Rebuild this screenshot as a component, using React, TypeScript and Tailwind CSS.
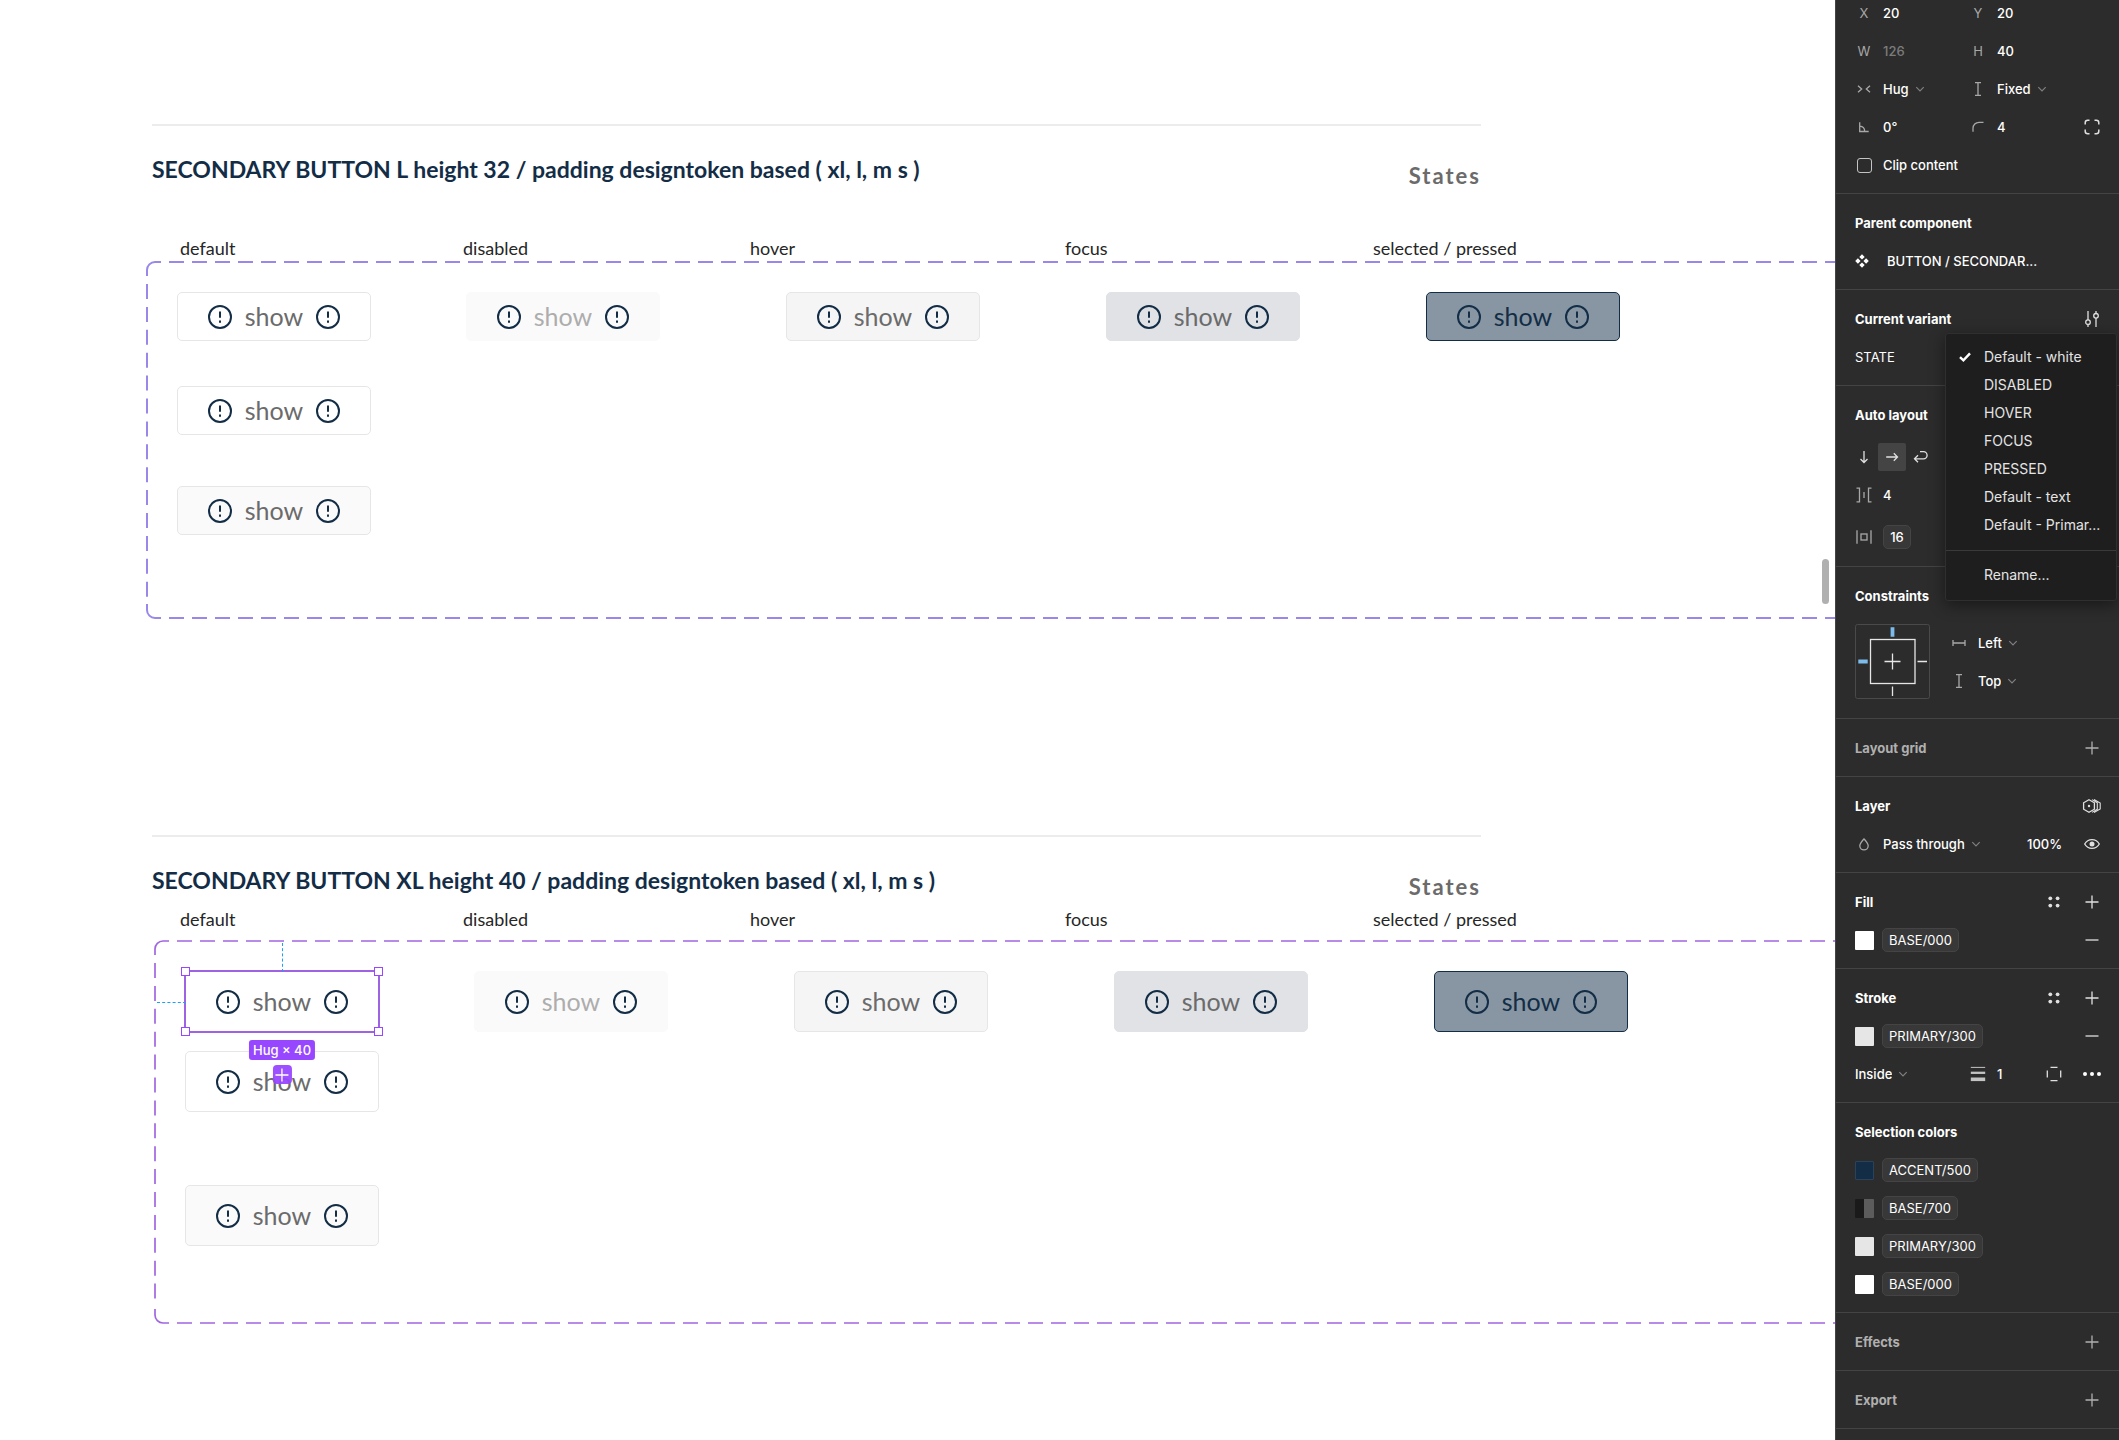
import { ReactNode, useState } from "react";
import clsx from "clsx";

const cell = "flex w-[38px] shrink-0 items-center justify-center";

/* ---------- icons ---------- */

const Icon = ({
  children,
  className = "text-[#e0e0e0]",
}: {
  children: ReactNode;
  className?: string;
}) => (
  <svg
    viewBox="0 0 24 24"
    className={clsx("size-6 shrink-0", className)}
    fill="none"
    stroke="currentColor"
    strokeWidth="1.3"
    aria-hidden="true"
  >
    {children}
  </svg>
);

const muted = "text-[#a8a8a8]";

const PlusIcon = ({ className }: { className?: string }) => (
  <Icon className={className}>
    <path d="M5.5 12h13M12 5.5v13" />
  </Icon>
);

const MinusIcon = () => (
  <Icon>
    <path d="M5.5 12h13" />
  </Icon>
);

const StylesIcon = () => (
  <Icon>
    <g fill="currentColor" stroke="none">
      <circle cx="8.3" cy="8.3" r="1.9" />
      <circle cx="15.6" cy="8.3" r="1.9" />
      <circle cx="8.3" cy="15.6" r="1.9" />
      <circle cx="15.6" cy="15.6" r="1.9" />
    </g>
  </Icon>
);

const HeightIcon = () => (
  <Icon className={muted}>
    <path d="M9 5.7h6M9 18.3h6M12 5.7v12.6" />
  </Icon>
);

const Chevron = () => (
  <svg
    viewBox="0 0 10 10"
    className="pointer-events-none size-[10px] shrink-0 text-[#808080]"
    fill="none"
    stroke="currentColor"
    strokeWidth="1.2"
    aria-hidden="true"
  >
    <path d="M1.3 3.2 5 6.9l3.7-3.7" />
  </svg>
);

const AlertIcon = () => (
  <svg
    viewBox="0 0 24 24"
    className="size-6 shrink-0 text-[#132d46]"
    fill="none"
    stroke="currentColor"
    strokeWidth="2"
    aria-hidden="true"
  >
    <circle cx="12" cy="12" r="11" />
    <path d="M12 6.6v6.2M12 15.6v2.2" />
  </svg>
);

/* ---------- canvas ---------- */

const variants = {
  white: "border-[#e6e6e6] bg-white text-[#6b6b6b]",
  light: "border-[#e6e6e6] bg-[#fafafa] text-[#6b6b6b]",
  disabled: "border-[#fafafa] bg-[#fafafa] text-[#adadad]",
  hover: "border-[#e6e6e6] bg-[#f5f5f5] text-[#6b6b6b]",
  focus: "border-[#e0e2e6] bg-[#e0e2e6] text-[#6b6b6b]",
  pressed: "border-[#132d46] bg-[#8796a2] text-[#132d46]",
};

type Size = "l" | "xl";

const ShowButton = ({
  variant,
  size,
}: {
  variant: keyof typeof variants;
  size: Size;
}) => (
  <button
    type="button"
    disabled={variant === "disabled"}
    className={clsx(
      "flex w-[194px] items-center justify-between rounded-[5px] border px-[30px]",
      size === "l" ? "h-[49px]" : "h-[61px]",
      variants[variant]
    )}
  >
    <AlertIcon />
    <span className="pb-0.5 text-[25px] leading-8">show</span>
    <AlertIcon />
  </button>
);

// dashed outline of a component set, open towards the right edge of the canvas
const DashedOutline = ({
  height,
  color,
  width,
}: {
  height: number;
  color: string;
  width: number;
}) => (
  <svg
    className="pointer-events-none absolute inset-0 size-full overflow-visible"
    fill="none"
    stroke={color}
    strokeWidth={width}
    aria-hidden="true"
  >
    <path d="M1 15V9a8 8 0 0 1 8-8h6" />
    <path d={`M1 ${height - 15}v6a8 8 0 0 0 8 8h6`} />
    <line x1="23" y1="1" x2="100%" y2="1" strokeDasharray="15 8" />
    <line
      x1="23"
      y1={height - 1}
      x2="100%"
      y2={height - 1}
      strokeDasharray="15 8"
    />
    <line x1="1" y1="23" x2="1" y2={height - 22} strokeDasharray="15 7.9" />
  </svg>
);

const Heading = ({ title, size }: { title: string; size: Size }) => (
  <div
    className={clsx(
      "mr-[354px] ml-[152px] flex items-start justify-between border-t-2 border-[#ececec] pt-[27px]",
      size === "l" ? "h-[112px]" : "h-[72px]"
    )}
  >
    <h2 className="text-[23px] leading-8 font-bold whitespace-nowrap text-[#132d46]">
      {title}
    </h2>
    <span className="pt-[7px] text-[22px] leading-8 font-bold tracking-[2px] text-[#6b6b6b]">
      States
    </span>
  </div>
);

const StateLabels = () => (
  <div className="ml-[180px] grid grid-cols-[283px_287px_315px_308px_auto] text-[18px] leading-6 whitespace-nowrap text-[#262626]">
    <span>default</span>
    <span>disabled</span>
    <span>hover</span>
    <span>focus</span>
    <span>selected / pressed</span>
  </div>
);

const Handle = ({ className }: { className: string }) => (
  <span
    className={clsx(
      "absolute size-[9px] border border-[#9747ff] bg-white",
      className
    )}
  />
);

const Selection = () => (
  <div className="pointer-events-none absolute -inset-px border-2 border-[#9f62e3]">
    <Handle className="-top-[5px] -left-[5px]" />
    <Handle className="-top-[5px] -right-[5px]" />
    <Handle className="-bottom-[5px] -left-[5px]" />
    <Handle className="-right-[5px] -bottom-[5px]" />
    <span className="absolute bottom-full left-1/2 h-[29px] border-l border-dashed border-[#18a0fb]" />
    <span className="absolute top-1/2 right-full w-[29px] border-t border-dashed border-[#18a0fb]" />
    <div className="absolute top-full left-1/2 mt-[9px] flex -translate-x-1/2 flex-col items-center gap-[5px]">
      <span className="rounded-[3px] bg-[#9747ff] px-1 font-[Inter] text-[13px] leading-5 font-medium whitespace-nowrap text-white">
        Hug × 40
      </span>
      <span className="flex size-[19px] items-center justify-center rounded-[4px] bg-[#9747ff]/95">
        <PlusIcon className="text-white" />
      </span>
    </div>
  </div>
);

const stateRow = "grid grid-cols-[289px_320px_320px_320px_194px] items-start";

const Canvas = () => (
  <main className="relative min-w-0 flex-1 overflow-hidden bg-white pt-[124px] font-[Lato,sans-serif]">
    <Heading
      size="l"
      title="SECONDARY BUTTON L height 32 / padding designtoken based ( xl, l, m s )"
    />
    <StateLabels />
    <section className="relative mt-px ml-[146px] pt-[31px] pb-[84px] pl-[31px]">
      <DashedOutline height={358} color="#9b87ea" width={2} />
      <div className={stateRow}>
        <ShowButton size="l" variant="white" />
        <ShowButton size="l" variant="disabled" />
        <ShowButton size="l" variant="hover" />
        <ShowButton size="l" variant="focus" />
        <ShowButton size="l" variant="pressed" />
      </div>
      <div className="mt-[45px] flex flex-col gap-[51px]">
        <ShowButton size="l" variant="white" />
        <ShowButton size="l" variant="light" />
      </div>
    </section>

    <div className="h-[216px]" />

    <Heading
      size="xl"
      title="SECONDARY BUTTON XL height 40 / padding designtoken based ( xl, l, m s )"
    />
    <StateLabels />
    <section className="relative mt-[9px] ml-[154px] pt-[31px] pb-[78px] pl-[31px]">
      <DashedOutline height={384} color="#a066e0" width={1.7} />
      <div className={stateRow}>
        <div className="relative z-10 w-[194px]">
          <ShowButton size="xl" variant="white" />
          <Selection />
        </div>
        <ShowButton size="xl" variant="disabled" />
        <ShowButton size="xl" variant="hover" />
        <ShowButton size="xl" variant="focus" />
        <ShowButton size="xl" variant="pressed" />
      </div>
      <div className="mt-[19px] flex flex-col gap-[73px]">
        <ShowButton size="xl" variant="white" />
        <ShowButton size="xl" variant="light" />
      </div>
    </section>

    {/* scrollbar thumb */}
    <div className="absolute top-[559px] right-[6px] h-[45px] w-[7px] rounded-full bg-[#b0b0b0]" />
  </main>
);

/* ---------- inspector ---------- */

const Section = ({
  title,
  dim,
  actions,
  children,
}: {
  title: string;
  dim?: boolean;
  actions?: ReactNode;
  children?: ReactNode;
}) => (
  <section className="relative border-b border-[#444] pt-[10px] pb-[9px]">
    <div className="flex h-[38px] items-center pr-2 pl-[19px]">
      <h3
        className={clsx(
          "flex-1 font-bold",
          dim ? "text-[#b0b0b0]" : "text-white"
        )}
      >
        {title}
      </h3>
      {actions}
    </div>
    {children}
  </section>
);

const IconButton = ({
  label,
  children,
}: {
  label: string;
  children: ReactNode;
}) => (
  <button type="button" aria-label={label} className={cell}>
    {children}
  </button>
);

const Field = ({
  label,
  value,
  icon,
  dim,
}: {
  label: string;
  value: string;
  icon?: ReactNode;
  dim?: boolean;
}) => (
  <label className="flex w-[114px] items-center">
    <span className={clsx(cell, muted)}>{icon || label}</span>
    <input
      aria-label={label}
      defaultValue={value}
      className={clsx(
        "w-[60px] bg-transparent font-medium outline-none",
        dim && "text-[#7c7c7c]"
      )}
    />
  </label>
);

const Dropdown = ({ label, value }: { label: string; value: string }) => (
  <label className="flex items-center gap-[6px]">
    <select
      aria-label={label}
      className="field-sizing-content appearance-none bg-transparent font-medium outline-none"
    >
      <option>{value}</option>
    </select>
    <Chevron />
  </label>
);

const Swatch = ({ color, name }: { color: string; name: string }) => (
  <div className="flex h-[38px] items-center pl-[19px]">
    <span className={clsx("size-[19px] rounded-[1px]", color)} />
    <button
      type="button"
      className="ml-2 h-6 rounded-[5px] border border-[#444] bg-[#383838] px-[6px] leading-5"
    >
      {name}
    </button>
  </div>
);

const states = [
  "Default - white",
  "DISABLED",
  "HOVER",
  "FOCUS",
  "PRESSED",
  "Default - text",
  "Default - Primar...",
];

const StateMenu = () => {
  const [active, setActive] = useState(states[0]);

  return (
    <div
      role="menu"
      className="absolute top-[43px] right-[2px] z-10 w-[172px] rounded-[3px] border border-[#2f2f2f] bg-[#1e1e1e] pt-[9px] pb-[11px] text-[14px] text-[#e4e4e4] shadow-[0_4px_16px_rgba(0,0,0,0.45)]"
    >
      {states.map((state) => (
        <button
          key={state}
          type="button"
          role="menuitem"
          onClick={() => setActive(state)}
          className="flex h-7 w-full items-center whitespace-nowrap"
        >
          <span className={cell}>
            {state === active && (
              <svg
                viewBox="0 0 12 12"
                className="size-3"
                fill="none"
                stroke="white"
                strokeWidth="2.4"
                aria-hidden="true"
              >
                <path d="M1 6.2 4.4 9.4 11 2.4" />
              </svg>
            )}
          </span>
          {state}
        </button>
      ))}
      <div className="mt-[11px] mb-[10px] border-t border-[#3a3a3a]" />
      <button
        type="button"
        role="menuitem"
        className="flex h-7 w-full items-center pl-[38px]"
      >
        Rename...
      </button>
    </div>
  );
};

const ConstraintsBox = () => (
  <svg
    viewBox="0 0 75 75"
    className="ml-[19px] size-[75px] shrink-0"
    fill="none"
    stroke="#e6e6e6"
    strokeWidth="1.3"
    aria-hidden="true"
  >
    <rect x=".5" y=".5" width="74" height="74" rx="2" stroke="#4a4a4a" strokeWidth="1" />
    <rect x="15.5" y="15.5" width="44.5" height="44" />
    <path d="M29.5 37.5h16M37.5 29.5v16M62.5 37.5H72M37.5 62.5V72" />
    <path d="M3.3 37.5h9.4M37.5 3.3v9.4" stroke="#7cbcea" strokeWidth="3.8" />
  </svg>
);

const Inspector = () => (
  <aside className="w-[284px] shrink-0 overflow-hidden border-l border-[#444] bg-[#2c2c2c] font-[Inter,sans-serif] text-[13px] leading-5 text-white">
    <section className="border-b border-[#444] pr-2 pb-[9px] pl-[9px]">
      <div className="flex h-8 items-center pb-[6px]">
        <Field label="X" value="20" />
        <Field label="Y" value="20" />
      </div>
      <div className="flex h-[38px] items-center">
        <Field label="W" value="126" dim />
        <Field label="H" value="40" />
      </div>
      <div className="flex h-[38px] items-center">
        <span className={cell}>
          <Icon className={muted}>
            <path d="M6 8.7 9.7 12 6 15.3M18 8.7 14.3 12l3.7 3.3" />
          </Icon>
        </span>
        <div className="w-[76px]">
          <Dropdown label="Horizontal resizing" value="Hug" />
        </div>
        <span className={cell}>
          <HeightIcon />
        </span>
        <Dropdown label="Vertical resizing" value="Fixed" />
      </div>
      <div className="flex h-[38px] items-center">
        <Field
          label="Rotation"
          value="0°"
          icon={
            <Icon className={muted}>
              <path d="M7.7 7.3v9.2h9M7.7 11.2c3 .2 5 2.2 5 5.3" />
            </Icon>
          }
        />
        <Field
          label="Corner radius"
          value="4"
          icon={
            <Icon className={muted}>
              <path d="M7 16.7v-3.4a6 6 0 0 1 6-6h4.5" />
            </Icon>
          }
        />
        <button
          type="button"
          aria-label="Independent corners"
          className="ml-auto flex w-[38px] justify-center"
        >
          <Icon>
            <path
              d="M5.2 9.5V7.7a2.5 2.5 0 0 1 2.5-2.5h1.8M14.5 5.2h1.8a2.5 2.5 0 0 1 2.5 2.5v1.8M18.8 14.5v1.8a2.5 2.5 0 0 1-2.5 2.5h-1.8M9.5 18.8H7.7a2.5 2.5 0 0 1-2.5-2.5v-1.8"
              strokeWidth="1.5"
            />
          </Icon>
        </button>
      </div>
      <label className="flex h-[38px] items-center">
        <span className={cell}>
          <input
            type="checkbox"
            className="size-[15px] appearance-none rounded-[3px] border border-[#c4c4c4]"
          />
        </span>
        <span className="font-medium">Clip content</span>
      </label>
    </section>

    <Section title="Parent component">
      <div className="flex h-[38px] items-center pl-[14px] font-medium">
        <Icon className="text-white">
          <path
            d="M12 5.2 14.7 7.9 12 10.6 9.3 7.9zM12 13.4l2.7 2.7L12 18.8l-2.7-2.7zM7.9 9.3l2.7 2.7-2.7 2.7L5.2 12zM16.1 9.3l2.7 2.7-2.7 2.7-2.7-2.7z"
            fill="currentColor"
            stroke="none"
          />
        </Icon>
        <span className="ml-[13px]">BUTTON / SECONDAR...</span>
      </div>
    </Section>

    <Section
      title="Current variant"
      actions={
        <IconButton label="Configure variant">
          <Icon>
            <circle cx="8" cy="15.2" r="2.3" />
            <circle cx="16" cy="8.8" r="2.3" />
            <path d="M8 4v8.9M8 17.5V20M16 4v2.5M16 11.1V20" />
          </Icon>
        </IconButton>
      }
    >
      <div className="flex h-[38px] items-center pl-[19px]">STATE</div>
      <StateMenu />
    </Section>

    <Section title="Auto layout">
      <div className="mt-1 flex h-[38px] items-center pl-[14px]">
        <button
          type="button"
          aria-label="Vertical layout"
          className="flex size-7 items-center justify-center"
        >
          <Icon>
            <path d="M12 6v11.5M8.5 14l3.5 3.5 3.5-3.5" />
          </Icon>
        </button>
        <button
          type="button"
          aria-label="Horizontal layout"
          className="flex size-7 items-center justify-center rounded-[2px] bg-[#444]"
        >
          <Icon>
            <path d="M6.2 12h11.3M13.8 8.3l3.7 3.7-3.7 3.7" />
          </Icon>
        </button>
        <button
          type="button"
          aria-label="Wrap"
          className="flex size-7 items-center justify-center"
        >
          <Icon>
            <path d="M6.5 13.8h9a3.6 3.6 0 0 0 0-7.2H12M10 10.3l-3.5 3.5 3.5 3.5" />
          </Icon>
        </button>
      </div>
      <div className="flex h-[38px] items-center pl-[9px]">
        <Field
          label="Horizontal gap"
          value="4"
          icon={
            <Icon className={muted}>
              <path d="M4.5 5.2h3v13.6h-3M19.5 5.2h-3v13.6h3M12 9v6" />
            </Icon>
          }
        />
      </div>
      <label className="mt-1 mb-px flex h-[38px] items-center pl-[9px]">
        <span className={cell}>
          <Icon className={muted}>
            <path d="M5 5.2v13.6M19 5.2v13.6" />
            <rect x="9" y="9" width="6" height="6" />
          </Icon>
        </span>
        <input
          aria-label="Padding"
          defaultValue="16"
          className="h-6 w-7 rounded-[5px] border border-[#444] bg-[#383838] text-center font-medium outline-none"
        />
      </label>
    </Section>

    <Section title="Constraints">
      <div className="flex items-start pt-[9px] pb-[10px]">
        <ConstraintsBox />
        <div className="-mb-px ml-[10px]">
          <div className="flex h-[38px] items-center">
            <span className={cell}>
              <Icon className={muted}>
                <path d="M6 12h12M6 9v6M18 9v6" />
              </Icon>
            </span>
            <Dropdown label="Horizontal constraint" value="Left" />
          </div>
          <div className="flex h-[38px] items-center">
            <span className={cell}>
              <HeightIcon />
            </span>
            <Dropdown label="Vertical constraint" value="Top" />
          </div>
        </div>
      </div>
    </Section>

    <Section
      title="Layout grid"
      dim
      actions={
        <IconButton label="Add layout grid">
          <PlusIcon className="text-[#b0b0b0]" />
        </IconButton>
      }
    />

    <Section
      title="Layer"
      actions={
        <IconButton label="Apply variable mode">
          <Icon>
            <path d="M9 5.7 14.4 8.8v6.4L9 18.3l-5.4-3.1V8.8z" />
            <path d="M14 5.4 20.2 9v6L14 18.6M12 5.6 17.3 8.800v6.4L12 18.4" strokeWidth="1.1" />
            <circle cx="9" cy="12" r="1.2" fill="currentColor" stroke="none" />
          </Icon>
        </IconButton>
      }
    >
      <div className="flex h-[38px] items-center pr-2 pl-[9px]">
        <span className={cell}>
          <Icon className={muted}>
            <path d="M12 6.8c2.3 2.7 4.2 4.6 4.2 6.9a4.2 4.2 0 0 1-8.4 0c0-2.3 1.9-4.2 4.2-6.9z" />
          </Icon>
        </span>
        <div className="flex-1">
          <Dropdown label="Blend mode" value="Pass through" />
        </div>
        <input
          aria-label="Layer opacity"
          defaultValue="100%"
          className="w-[46px] bg-transparent font-medium outline-none"
        />
        <IconButton label="Toggle visibility">
          <Icon>
            <path d="M4.7 12c1.6-2.9 4.2-4.4 7.3-4.4s5.7 1.5 7.3 4.4c-1.6 2.9-4.2 4.4-7.3 4.4S6.3 14.9 4.7 12z" />
            <circle cx="12" cy="12" r="2.5" fill="currentColor" stroke="none" />
          </Icon>
        </IconButton>
      </div>
    </Section>

    <Section
      title="Fill"
      actions={
        <>
          <IconButton label="Fill styles">
            <StylesIcon />
          </IconButton>
          <IconButton label="Add fill">
            <PlusIcon />
          </IconButton>
        </>
      }
    >
      <div className="flex items-center justify-between pr-2">
        <Swatch color="bg-white" name="BASE/000" />
        <IconButton label="Remove fill">
          <MinusIcon />
        </IconButton>
      </div>
    </Section>

    <Section
      title="Stroke"
      actions={
        <>
          <IconButton label="Stroke styles">
            <StylesIcon />
          </IconButton>
          <IconButton label="Add stroke">
            <PlusIcon />
          </IconButton>
        </>
      }
    >
      <div className="flex items-center justify-between pr-2">
        <Swatch color="bg-[#e6e6e6]" name="PRIMARY/300" />
        <IconButton label="Remove stroke">
          <MinusIcon />
        </IconButton>
      </div>
      <div className="flex h-[38px] items-center pr-2 pl-[19px]">
        <div className="w-[104px]">
          <Dropdown label="Stroke position" value="Inside" />
        </div>
        <span className={cell}>
          <Icon className="text-[#c4c4c4]">
            <path d="M4.8 5.4h14.4" strokeWidth="1" />
            <path d="M4.8 10.8h14.4" strokeWidth="2.3" />
            <path d="M4.8 17.3h14.4" strokeWidth="3.6" />
          </Icon>
        </span>
        <input
          aria-label="Stroke weight"
          defaultValue="1"
          className="w-[38px] bg-transparent font-medium outline-none"
        />
        <IconButton label="Stroke per side">
          <Icon>
            <path d="M8.5 5.3h7M8.5 18.7h7M5.3 8.5v7M18.7 8.5v7" />
          </Icon>
        </IconButton>
        <IconButton label="Advanced stroke">
          <Icon className="text-white">
            <g fill="currentColor" stroke="none">
              <circle cx="5" cy="12" r="2" />
              <circle cx="12" cy="12" r="2" />
              <circle cx="19" cy="12" r="2" />
            </g>
          </Icon>
        </IconButton>
      </div>
    </Section>

    <Section title="Selection colors">
      <Swatch color="border border-[#2b4359] bg-[#132d46]" name="ACCENT/500" />
      <Swatch
        color="bg-linear-to-r from-[#1a1a1a] from-50% to-[#5c5c5c] to-50%"
        name="BASE/700"
      />
      <Swatch color="bg-[#e6e6e6]" name="PRIMARY/300" />
      <Swatch color="bg-white" name="BASE/000" />
    </Section>

    <Section
      title="Effects"
      dim
      actions={
        <IconButton label="Add effect">
          <PlusIcon className="text-[#b0b0b0]" />
        </IconButton>
      }
    />
    <Section
      title="Export"
      dim
      actions={
        <IconButton label="Add export">
          <PlusIcon className="text-[#b0b0b0]" />
        </IconButton>
      }
    />
  </aside>
);

const App = () => (
  <div className="flex min-h-screen">
    <Canvas />
    <Inspector />
  </div>
);

export default App;
